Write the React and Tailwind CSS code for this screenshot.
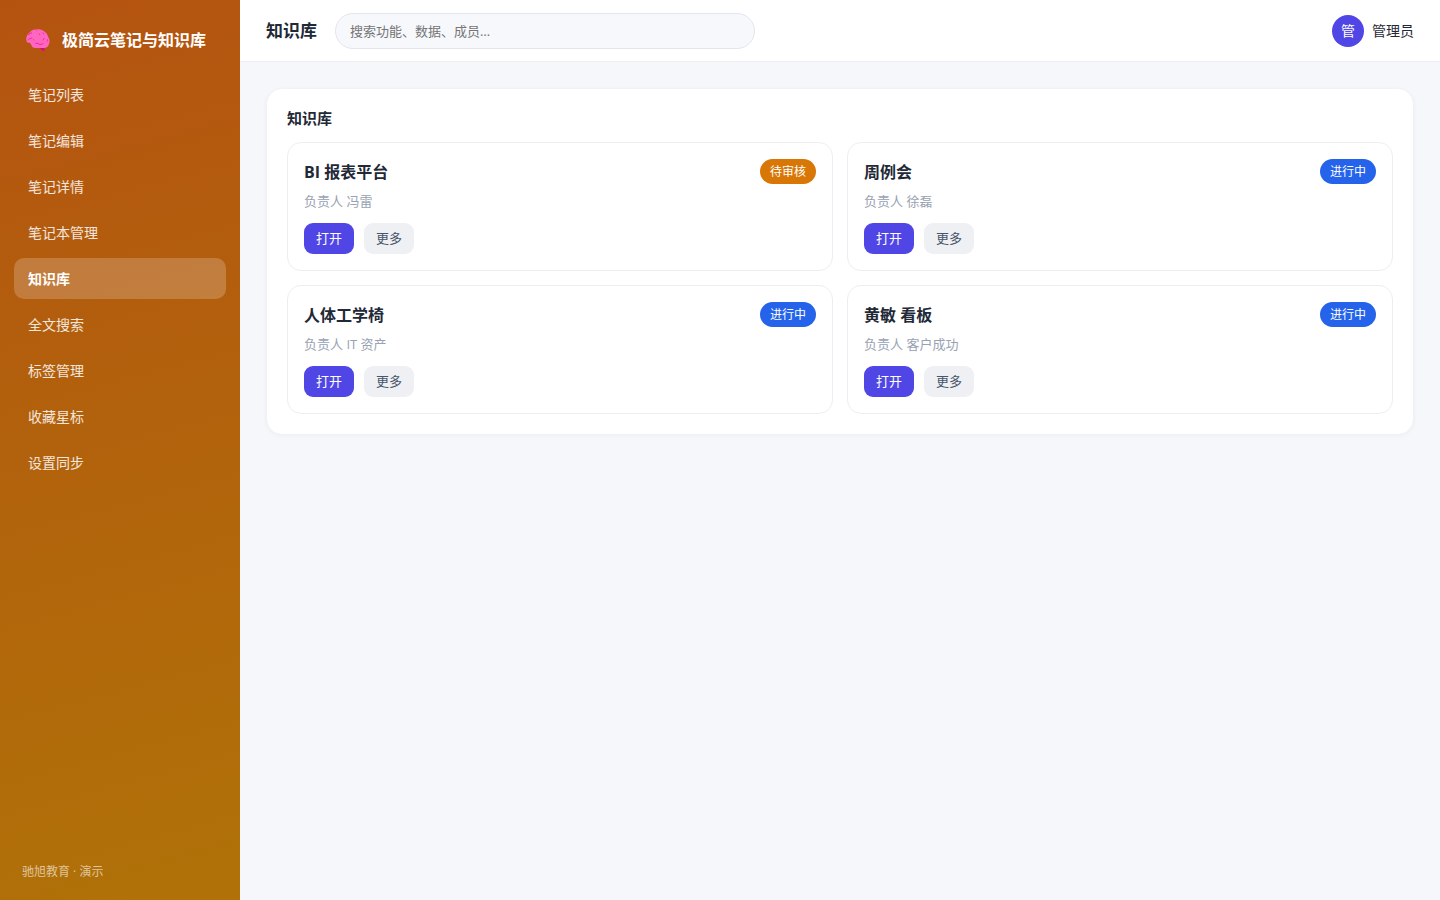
import clsx from "clsx";

const navItems = [
  "笔记列表",
  "笔记编辑",
  "笔记详情",
  "笔记本管理",
  "知识库",
  "全文搜索",
  "标签管理",
  "收藏星标",
  "设置同步",
];

const items = [
  { title: "BI 报表平台", owner: "冯雷", status: "待审核" },
  { title: "周例会", owner: "徐磊", status: "进行中" },
  { title: "人体工学椅", owner: "IT 资产", status: "进行中" },
  { title: "黄敏 看板", owner: "客户成功", status: "进行中" },
];

const statusColors = {
  待审核: "bg-[#d97706]",
  进行中: "bg-[#2563eb]",
};

function BrainLogo() {
  return (
    <svg viewBox="0 0 72 69" className="w-6 h-[23px]" aria-hidden="true">
      <path d="M39 54h16v12l-6-1-3-5-7-3z" fill="#e3008c" />
      <path
        d="M1 35C-1 24 4 14 13 8 20 2 28 0 35 1c8-1 16 2 21 7 6 3 9 9 10 15 5 6 6 14 3 21-1 7-6 12-13 13H30c-7 1-12-3-14-9-2-4-3-6-5-7-5 1-9-1-10-6z"
        fill="#ff66c0"
      />
      <path
        d="M6 18c4-4 7-6 12-6M31 3l3 2M50 11l5 4M39 14l3 4M5 34c3-4 8-6 14-7M22 31l3 3M54 27c0 3-1 5-4 7M28 43h8l4 3h8l4-4M64 31c1 3 1 5-1 7"
        fill="none"
        stroke="#f0189f"
        strokeWidth="2.4"
      />
    </svg>
  );
}

function Sidebar({ active }) {
  return (
    <aside className="w-60 shrink-0 flex flex-col px-3.5 py-5 text-white bg-[linear-gradient(165deg,#b45310,#b07208)]">
      <div className="flex items-center gap-3 px-3 h-10 mb-3.5">
        <BrainLogo />
        <span className="text-base font-bold whitespace-nowrap">极简云笔记与知识库</span>
      </div>
      <nav className="flex flex-col gap-[5px]">
        {navItems.map((name) => (
          <a
            key={name}
            href="#"
            className={clsx(
              "flex items-center h-[41px] px-3.5 rounded-[10px] text-sm",
              name === active ? "bg-white/20 font-bold" : "text-white/85"
            )}
          >
            {name}
          </a>
        ))}
      </nav>
      <p className="mt-auto px-2 text-xs text-white/60">驰旭教育 · 演示</p>
    </aside>
  );
}

function Header({ title }) {
  return (
    <header className="flex items-center justify-between h-[62px] px-[26px] bg-white border-b border-[#eceef2]">
      <div className="flex items-center gap-[18px]">
        <h1 className="text-[17px] font-bold">{title}</h1>
        <input
          type="search"
          aria-label="搜索"
          placeholder="搜索功能、数据、成员…"
          className="w-[420px] h-9 px-3.5 rounded-full border border-[#e2e5ee] bg-[#f7f8fc] text-[13px] placeholder:text-[#757575]"
        />
      </div>
      <div className="flex items-center gap-2 text-sm">
        <span className="flex items-center justify-center size-8 rounded-full bg-[#4f46e5] text-white">管</span>
        <span>管理员</span>
      </div>
    </header>
  );
}

function ItemCard({ title, owner, status }) {
  return (
    <article className="p-4 rounded-[14px] border border-[#eceef2]">
      <div className="flex items-start justify-between">
        <h3 className="text-base leading-[26px] font-bold">{title}</h3>
        <span className={clsx("px-2.5 rounded-full text-xs leading-[25px] text-white", statusColors[status])}>
          {status}
        </span>
      </div>
      <p className="mt-1.5 text-[13px] leading-5 text-[#98a2b3]">负责人 {owner}</p>
      <div className="flex gap-2.5 mt-3">
        <button type="button" className="w-[50px] h-[31px] rounded-[9px] bg-[#4f46e5] text-[13px] text-white">
          打开
        </button>
        <button type="button" className="w-[50px] h-[31px] rounded-[9px] bg-[#eef0f4] text-[13px] text-[#475569]">
          更多
        </button>
      </div>
    </article>
  );
}

export default function App() {
  return (
    <div className="flex min-h-screen bg-[#f5f7fb] text-[#1f2937] font-['Open_Sans','Noto_Sans_CJK_SC',sans-serif]">
      <Sidebar active="知识库" />
      <div className="flex-1 min-w-0">
        <Header title="知识库" />
        <main className="p-[26px]">
          <section className="p-5 rounded-2xl bg-white border border-[#f0f2f5] shadow-[0_1px_4px_rgba(15,23,42,0.04)]">
            <h2 className="mb-3.5 text-[15px] leading-[19px] font-bold">知识库</h2>
            <div className="grid grid-cols-2 gap-3.5">
              {items.map((item) => (
                <ItemCard key={item.title} {...item} />
              ))}
            </div>
          </section>
        </main>
      </div>
    </div>
  );
}
